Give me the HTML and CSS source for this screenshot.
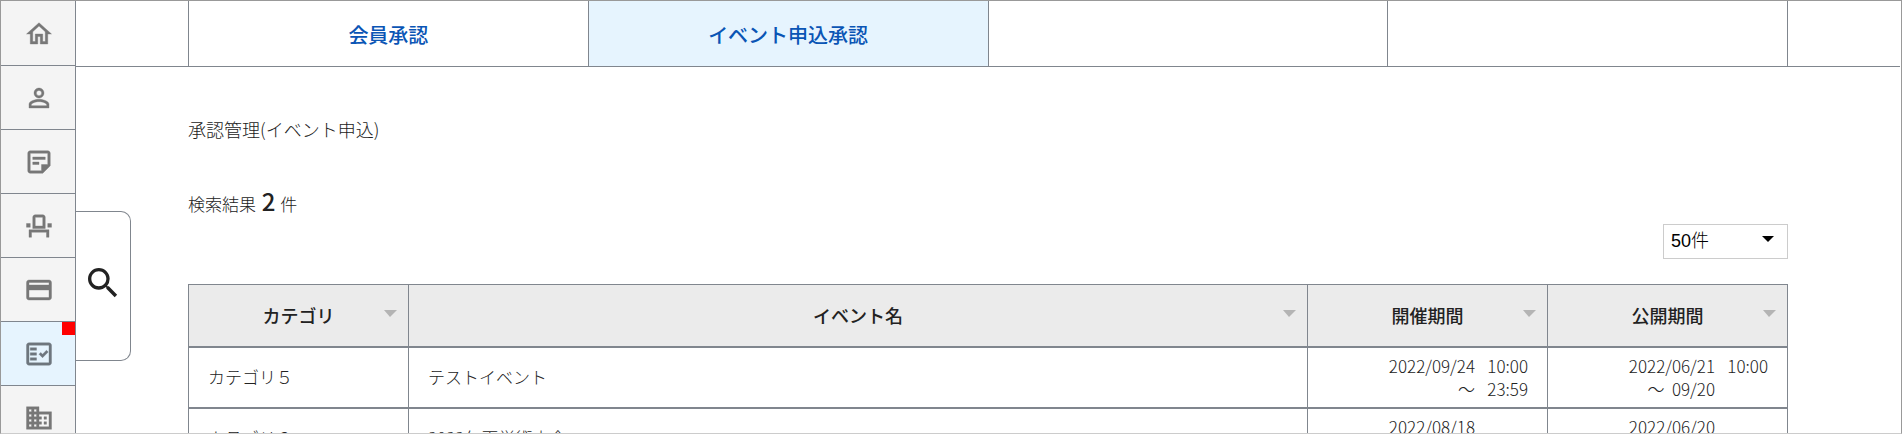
FILE: index.html
```
<!DOCTYPE html>
<html lang="ja">
<head>
  <meta charset="UTF-8">
  <meta name="viewport" content="width=device-width, initial-scale=1.0">
  <title>承認管理(イベント申込)</title>
  <link rel="stylesheet" href="styles.css">
</head>
<body>
  <div class="layout">
    <nav class="sidebar">
      <a href="#" aria-label="ホーム">
        <svg viewBox="0 0 24 24"><path d="M12 5.69l5 4.5V18h-2v-6H9v6H7v-7.81l5-4.5M12 3L2 12h3v8h6v-6h2v6h6v-8h3L12 3z"/></svg>
      </a>
      <a href="#" aria-label="会員">
        <svg viewBox="0 0 24 24"><path d="M12 5.9a2.1 2.1 0 110 4.2 2.1 2.1 0 010-4.2m0 9c2.97 0 6.1 1.46 6.1 2.1v1.1H5.9V17c0-.64 3.13-2.1 6.1-2.1M12 4C9.79 4 8 5.79 8 8s1.79 4 4 4 4-1.79 4-4-1.79-4-4-4zm0 9c-2.67 0-8 1.34-8 4v3h16v-3c0-2.66-5.33-4-8-4z"/></svg>
      </a>
      <a href="#" aria-label="お知らせ">
        <svg viewBox="0 0 24 24"><path d="M19 5v9h-5v5H5V5h14m0-2H5c-1.1 0-2 .9-2 2v14c0 1.1.9 2 2 2h10l6-6V5c0-1.1-.9-2-2-2zm-7 11H7v-2h5v2zm5-4H7V8h10v2z"/></svg>
      </a>
      <a href="#" aria-label="イベント">
        <svg viewBox="0 0 24 24"><path d="M15 5v7H9V5h6m0-2H9c-1.1 0-2 .9-2 2v9h10V5c0-1.1-.9-2-2-2zm7 7h-3v3h3v-3zM5 10H2v3h3v-3zm15 5H4v6h2v-4h12v4h2v-6z"/></svg>
      </a>
      <a href="#" aria-label="決済">
        <svg viewBox="0 0 24 24"><path d="M20 4H4c-1.11 0-1.99.89-1.99 2L2 18c0 1.11.89 2 2 2h16c1.11 0 2-.89 2-2V6c0-1.11-.89-2-2-2zm0 14H4v-6h16v6zm0-10H4V6h16v2z"/></svg>
      </a>
      <a href="#" class="active" aria-label="承認管理">
        <svg viewBox="0 0 24 24"><path fill-rule="evenodd" d="M20 3H4c-1.1 0-2 .9-2 2v14c0 1.1.9 2 2 2h16c1.1 0 2-.9 2-2V5c0-1.1-.9-2-2-2zm0 16H4V5h16v14z"/><path d="M19.41 10.42L17.99 9l-3.17 3.17-1.41-1.42L12 12.16 14.82 15zM5 7h5v2H5zM5 11h5v2H5zM5 15h5v2H5z"/></svg>
        <span class="badge"></span>
      </a>
      <a href="#" aria-label="団体">
        <svg viewBox="0 0 24 24"><path d="M12 7V3H2v18h20V7H12zM6 19H4v-2h2v2zm0-4H4v-2h2v2zm0-4H4V9h2v2zm0-4H4V5h2v2zm4 12H8v-2h2v2zm0-4H8v-2h2v2zm0-4H8V9h2v2zm0-4H8V5h2v2zm10 12h-8v-2h2v-2h-2v-2h2v-2h-2V9h8v10zm-2-8h-2v2h2v-2zm0 4h-2v2h2v-2z"/></svg>
      </a>
    </nav>

    <div class="main">
      <button type="button" class="search-open" aria-label="検索">
        <svg viewBox="0 0 24 24"><path d="M15.5 14h-.79l-.28-.27A6.47 6.47 0 0016 9.5 6.5 6.5 0 109.5 16c1.61 0 3.09-.59 4.23-1.57l.27.28v.79l5 4.99L20.49 19l-4.99-5zm-6 0C7.01 14 5 11.99 5 9.5S7.01 5 9.5 5 14 7.01 14 9.5 11.99 14 9.5 14z"/></svg>
      </button>

      <header class="tabs">
        <ul class="container">
          <li><a href="#">会員承認</a></li>
          <li class="active"><a href="#">イベント申込承認</a></li>
          <li></li>
          <li></li>
        </ul>
      </header>

      <main class="container">
        <h1>承認管理(イベント申込)</h1>
        <p class="result">検索結果 <strong>2</strong> 件</p>

        <div class="per-page">
          <select aria-label="表示件数">
            <option>50件</option>
            <option>100件</option>
          </select>
        </div>

        <table class="list">
          <colgroup>
            <col class="col-category">
            <col>
            <col class="col-date">
            <col class="col-date">
          </colgroup>
          <thead>
            <tr>
              <th>カテゴリ</th>
              <th>イベント名</th>
              <th>開催期間</th>
              <th>公開期間</th>
            </tr>
          </thead>
          <tbody>
            <tr>
              <td>カテゴリ５</td>
              <td>テストイベント</td>
              <td><div class="period"><span>2022/09/24</span><span>10:00</span><span>～</span><span>23:59</span></div></td>
              <td><div class="period"><span>2022/06/21</span><span>10:00</span><span>～&nbsp; 09/20</span><span></span></div></td>
            </tr>
            <tr>
              <td>カテゴリ２</td>
              <td>2022年夏学術大会</td>
              <td><div class="period"><span>2022/08/18</span><span></span><span>～&nbsp; 08/20</span><span></span></div></td>
              <td><div class="period"><span>2022/06/20</span><span></span><span>～&nbsp; 08/20</span><span></span></div></td>
            </tr>
          </tbody>
        </table>
      </main>
    </div>
  </div>
</body>
</html>
```
FILE: styles.css
```
* {
  box-sizing: border-box;
}

body {
  margin: 0;
  font-family: "Noto Sans CJK JP", sans-serif;
  font-size: 17px;
  font-weight: 300;
  color: #222;
  background: #fff;
}

a {
  color: inherit;
  text-decoration: none;
}

.layout {
  display: flex;
  height: 100vh;
  overflow: hidden;
  border: 1px solid #999;
  border-bottom-color: #ccc;
}

/* サイドバー */
.sidebar {
  flex: none;
  width: 75px;
  border-right: 1px solid #80868e;
}

.sidebar a {
  position: relative;
  display: flex;
  align-items: center;
  justify-content: center;
  height: 64px;
  padding-left: 1px;
  background: #f4f4f4;
  border-bottom: 1px solid #80868e;
}

.sidebar a:first-child {
  height: 65px;
  padding-top: 2px;
}

.sidebar svg {
  width: 30px;
  height: 30px;
  fill: #777;
  stroke: #777;
  stroke-width: .3;
}

.sidebar a.active {
  background: #e6f4fe;
}

.sidebar a.active svg {
  fill: #6e767e;
  stroke: #6e767e;
}

.badge {
  position: absolute;
  top: 0;
  right: 0;
  width: 13px;
  height: 13px;
  background: #f00;
}

.main {
  position: relative;
  flex: 1;
  min-width: 0;
  padding-right: 1px;
}

.container {
  width: 88%;
  max-width: 1600px;
  margin: 0 auto;
}

/* 検索パネルを開くボタン */
.search-open {
  position: absolute;
  top: 210px;
  left: 0;
  width: 55px;
  height: 150px;
  padding: 0 0 6px;
  background: #fff;
  border: 1px solid #80868e;
  border-left: 0;
  border-radius: 0 10px 10px 0;
  cursor: pointer;
}

.search-open svg {
  display: block;
  width: 40px;
  height: 40px;
  margin: 0 auto;
  fill: #222;
}

/* タブ */
.tabs {
  border-bottom: 1px solid #80868e;
}

.tabs ul {
  display: flex;
  height: 65px;
  padding: 0;
  list-style: none;
  border-left: 1px solid #80868e;
}

.tabs li {
  flex: 1;
  border-right: 1px solid #80868e;
}

.tabs li.active {
  background: #e6f4fe;
}

.tabs a {
  display: flex;
  align-items: center;
  justify-content: center;
  height: 100%;
  padding-top: 1px;
  font-size: 20px;
  font-weight: 500;
  color: #0a55b5;
}

h1 {
  margin: 49px 0 0;
  font-size: 18px;
  font-weight: 300;
  line-height: 26px;
}

.result {
  margin: 39px 0 0;
  line-height: 40px;
}

.result strong {
  margin: 0 1px 0 2px;
  font-size: 24px;
  font-weight: 500;
}

.per-page {
  display: flex;
  justify-content: flex-end;
  margin-bottom: 25px;
}

.per-page select {
  width: 125px;
  height: 35px;
  padding: 0 7px 2px;
  font-family: "Liberation Sans", "Noto Sans CJK JP", sans-serif;
  font-size: 18px;
  font-weight: 300;
  color: #000;
  border: 1px solid #ccc;
  border-radius: 0;
  appearance: none;
  background: url("data:image/svg+xml,%3Csvg xmlns='http://www.w3.org/2000/svg' width='12' height='6'%3E%3Cpath d='M0 0h12L6 6z'/%3E%3C/svg%3E") no-repeat right 13px top 11px #fff;
}

/* 一覧 */
.list {
  width: 100%;
  table-layout: fixed;
  border-collapse: collapse;
  border: 1px solid #80868e;
}

.col-category {
  width: 220px;
}

.col-date {
  width: 240px;
}

.list th,
.list td {
  border-left: 1px solid #80868e;
  border-bottom: 2px solid #80868e;
}

.list th {
  height: 62px;
  padding: 0;
  font-size: 18px;
  font-weight: 500;
  background: #ebebeb url("data:image/svg+xml,%3Csvg xmlns='http://www.w3.org/2000/svg' width='13' height='7'%3E%3Cpath fill='%23b4b4b4' d='M0 0h13L6 7z'/%3E%3C/svg%3E") no-repeat right 11px top 25px;
}

.list td {
  padding: 6px 19px 7px;
  line-height: 23px;
}

.period {
  display: grid;
  grid-template-columns: auto 41px;
  column-gap: 12px;
  text-align: right;
}

.period span {
  min-height: 23px;
}
```
